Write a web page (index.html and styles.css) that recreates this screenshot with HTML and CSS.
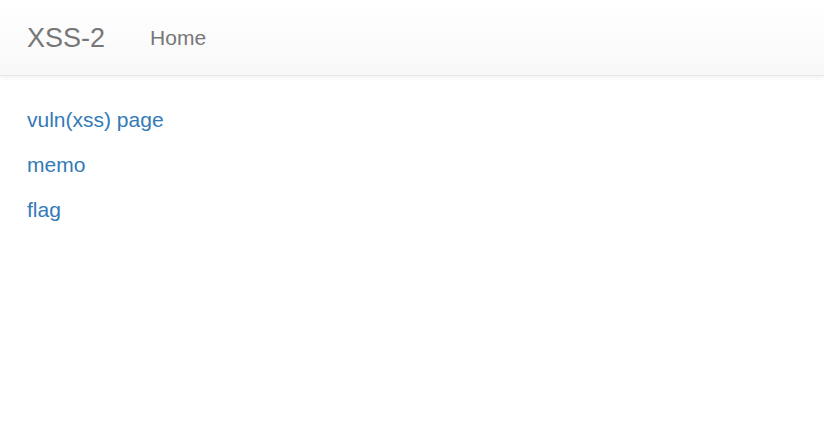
FILE: index.html
```html
<!DOCTYPE html>
<html lang="en">

<head>
    <meta charset="UTF-8" />
    <meta name="viewport" content="width=device-width, initial-scale=1.0" />
    <link rel="stylesheet" href="styles.css">
    <title>XSS-2</title>
</head>

<body>
    <nav class="navbar">
        <a class="brand" href="#">XSS-2</a>
        <ul class="nav">
            <li><a href="#">Home</a></li>
        </ul>
    </nav>

    <div class="content">
        <p><a href="#">vuln(xss) page</a></p>
        <p><a href="#">memo</a></p>
        <p><a href="#">flag</a></p>
    </div>
</body>

</html>
```

FILE: styles.css
```css
* {
    margin: 0;
    padding: 0;
    box-sizing: border-box;
}

body {
    font-family: 'Liberation Sans', Arial, sans-serif;
    font-size: 21px;
    line-height: 30px;
    color: #333;
    background: #fff;
}

a {
    text-decoration: none;
    color: #337ab7;
}

.navbar {
    display: flex;
    align-items: center;
    height: 76px;
    padding: 0 0 0 27px;
    background-image: linear-gradient(to bottom, #fff 0, #f8f8f8 100%);
    border-bottom: 1px solid #e7e7e7;
    box-shadow: inset 0 1px 0 rgba(255, 255, 255, .15), 0 1px 5px rgba(0, 0, 0, .075);
    margin-bottom: 29px;
}

.brand {
    font-size: 27px;
    line-height: 30px;
    color: #777;
    padding-right: 45px;
}

.nav {
    list-style: none;
    display: flex;
}

.nav a {
    color: #777;
    line-height: 30px;
}

.content {
    padding: 0 27px;
}

.content p {
    margin-bottom: 15px;
}
```
